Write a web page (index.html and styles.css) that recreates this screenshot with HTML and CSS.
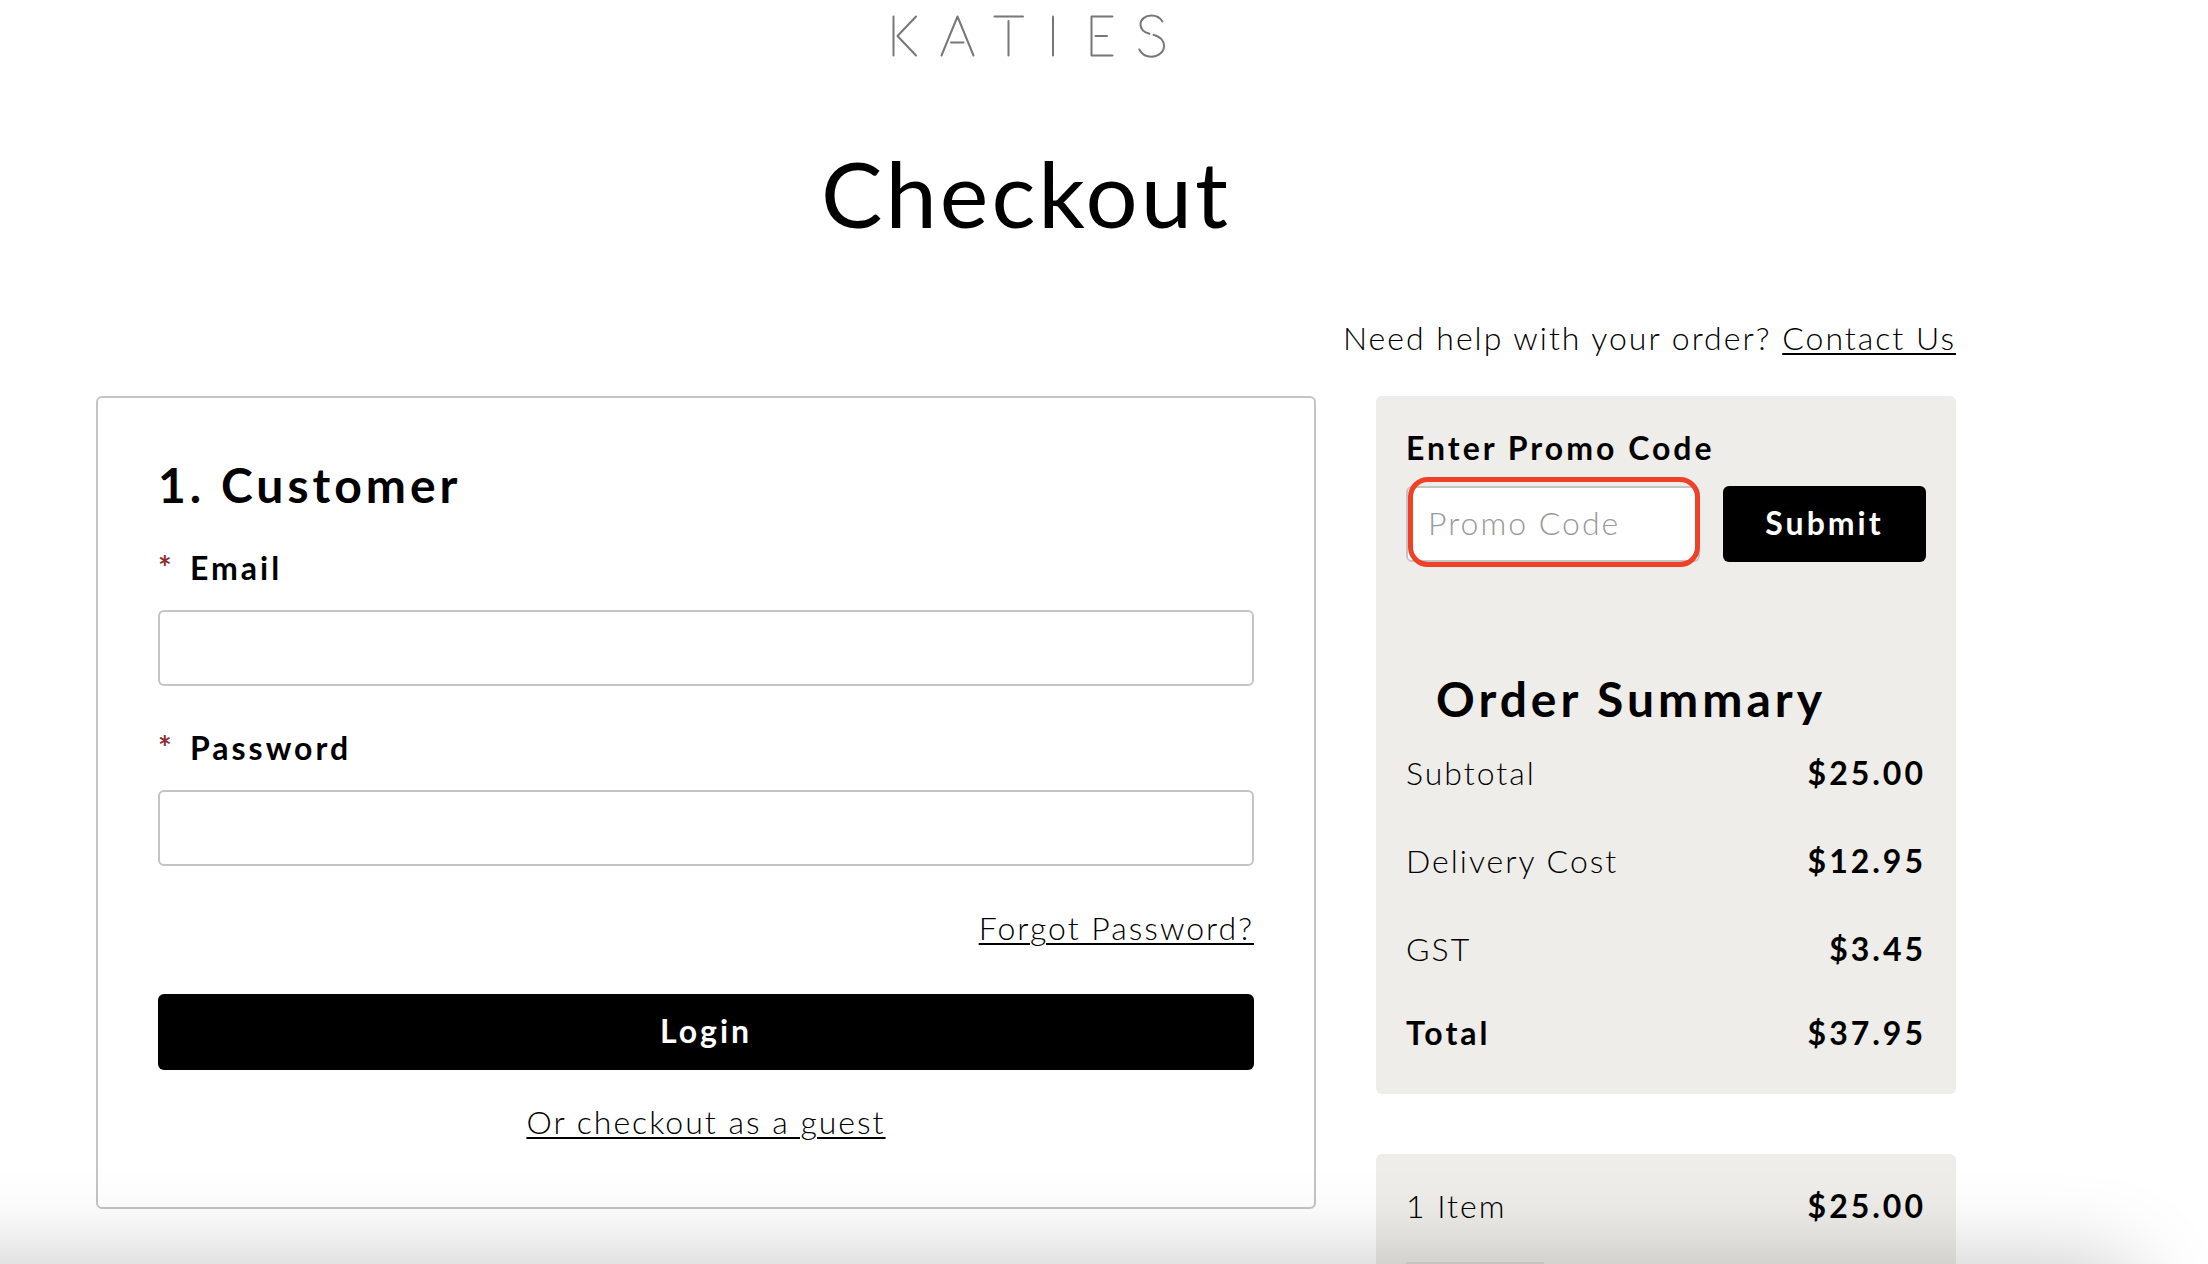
FILE: index.html
```html
<!DOCTYPE html>
<html lang="en">
<head>
<meta charset="utf-8">
<meta name="viewport" content="width=device-width, initial-scale=1">
<title>Checkout</title>
<link rel="stylesheet" href="styles.css">
</head>
<body>
<div class="page">
  <header class="header">
    <a class="logo" href="#" aria-label="Katies">
      <svg width="280" height="46" viewBox="26 13 280 46" fill="none" stroke="#77777a" stroke-width="2" stroke-linecap="round" stroke-linejoin="round" aria-hidden="true">
        <path d="M33.500 16.500V55.500M56 16.500L37.500 36L56 55.500"/>
        <path d="M81.500 55.500L97.500 16.500L113.500 55.500M91 42.500H103.500"/>
        <path d="M134.500 16.500H163M148.500 21V55.500"/>
        <path d="M193 16.500V55.500"/>
        <path d="M252.500 16.500H231.500V55.500H252.500M235.500 36H247"/>
        <path d="M302.500 21.500C300 17.500 296 15.500 291.500 15.500C285 15.500 280.500 19.500 280.500 24.500C280.500 30 285 32.500 289.500 33.800M293.500 34.800C299.500 36.500 304 40 304 46C304 52 298.500 56.700 291.500 56.700C286 56.700 281.500 54 279.300 49.500"/>
      </svg>
    </a>
    <h1 class="title">Checkout</h1>
  </header>

  <p class="help">Need help with your order? <a href="#">Contact Us</a></p>

  <main class="columns">
    <form class="customer">
      <h2 class="heading">1. Customer</h2>
      <div class="field">
        <label class="label" for="email"><span class="required">*</span>Email</label>
        <input class="input" id="email" type="email">
      </div>
      <div class="field">
        <label class="label" for="password"><span class="required">*</span>Password</label>
        <input class="input" id="password" type="password">
      </div>
      <a class="forgot" href="#">Forgot Password?</a>
      <button class="button" type="submit">Login</button>
      <a class="guest" href="#">Or checkout as a guest</a>
    </form>

    <aside class="sidebar">
      <section class="panel">
        <form class="promo">
          <label class="label" for="promo">Enter Promo Code</label>
          <div class="promo-row">
            <div class="promo-box">
              <input class="input" id="promo" type="text" placeholder="Promo Code">
            </div>
            <button class="button" type="submit">Submit</button>
          </div>
        </form>
        <h2 class="heading summary-heading">Order Summary</h2>
        <table class="totals">
          <tbody>
            <tr><th scope="row">Subtotal</th><td>$25.00</td></tr>
            <tr><th scope="row">Delivery Cost</th><td>$12.95</td></tr>
            <tr><th scope="row">GST</th><td>$3.45</td></tr>
            <tr class="total"><th scope="row">Total</th><td>$37.95</td></tr>
          </tbody>
        </table>
      </section>
      <section class="panel items">
        <div class="items-head"><span>1 Item</span><strong>$25.00</strong></div>
        <div class="thumb"></div>
      </section>
    </aside>
  </main>
</div>
<div class="bottom-shade"></div>
</body>
</html>
```

FILE: styles.css
```css
* {
  box-sizing: border-box;
}

html {
  height: 100%;
  overflow: hidden;
}

body {
  height: 100%;
  margin: 0;
  overflow: hidden;
  background: #fff;
  color: #000;
  font-family: Lato, "Open Sans", sans-serif;
  font-size: 32px;
  font-weight: 300;
  line-height: 40px;
  letter-spacing: 2px;
}

a {
  color: inherit;
  text-decoration: underline;
  text-decoration-thickness: 2px;
  text-underline-offset: 3px;
}

.page {
  padding: 13px 252px 0 96px;
}

.header {
  display: flex;
  flex-direction: column;
  align-items: center;
}

.logo,
.logo svg {
  display: block;
}

.title {
  margin: 84px 0 75px;
  font-size: 92px;
  font-weight: 400;
  line-height: 100px;
  letter-spacing: 3px;
}

.help {
  margin: 0 0 38px;
  text-align: right;
}

.columns {
  display: grid;
  grid-template-columns: 61fr 29fr;
  gap: 60px;
  align-items: start;
}

.customer {
  display: flex;
  flex-direction: column;
  padding: 57px 60px 65px;
  border: 2px solid #c4c4c4;
  border-radius: 6px;
}

.heading {
  margin: 0 0 34px;
  font-size: 48px;
  font-weight: 700;
  line-height: 60px;
  letter-spacing: 4px;
}

.field {
  margin-bottom: 42px;
}

.label {
  display: block;
  margin-bottom: 22px;
  font-weight: 700;
  letter-spacing: 3px;
}

.customer .heading {
  margin-bottom: 33px;
}

.required {
  display: inline-block;
  width: 32px;
  color: #8b2f2f;
}

.input {
  display: block;
  width: 100%;
  height: 76px;
  padding: 0 20px 4px;
  border: 2px solid #c4c4c4;
  border-radius: 6px;
  background: #fff;
  font: inherit;
  letter-spacing: 2px;
}

.input::placeholder {
  color: #999;
  opacity: 1;
}

.button {
  height: 76px;
  padding: 0 0 2px;
  border: 0;
  border-radius: 6px;
  background: #000;
  color: #fff;
  font: inherit;
  font-weight: 700;
  letter-spacing: 3px;
}

.forgot {
  align-self: flex-end;
  margin-bottom: 46px;
}

.guest {
  align-self: center;
  margin-top: 32px;
}

.sidebar {
  display: grid;
  gap: 60px;
}

.panel {
  padding: 32px 30px 21px;
  border-radius: 6px;
  background: #eeede9;
}

.promo .label {
  margin-bottom: 18px;
}

.promo-row {
  display: grid;
  grid-template-columns: 294fr 203fr;
  gap: 23px;
}

.promo-box {
  position: relative;
}

/* Highlight ring drawn over the promo code box */
.promo-box::after {
  content: "";
  position: absolute;
  inset: -9px 0 -5px 2px;
  border: 5px solid #ee4127;
  border-radius: 20px;
  pointer-events: none;
}

.summary-heading {
  margin: 107px 30px 0;
}

.totals {
  width: 100%;
  border-collapse: collapse;
}

.totals th,
.totals td {
  height: 88px;
  padding: 0;
}

.totals th {
  font-weight: 300;
  text-align: left;
}

.totals td {
  font-weight: 700;
  text-align: right;
  letter-spacing: 3px;
}

.totals .total th,
.totals .total td {
  height: 80px;
  font-weight: 700;
  letter-spacing: 3px;
}

.items-head {
  display: flex;
  justify-content: space-between;
  margin-bottom: 36px;
}

.items-head strong {
  font-weight: 700;
  letter-spacing: 3px;
}

.thumb {
  width: 138px;
  height: 180px;
  background: #dcdbde;
}

/* Soft shade rising from below the window */
.bottom-shade {
  position: fixed;
  top: 100%;
  right: 76px;
  left: -200px;
  height: 400px;
  border-radius: 20px;
  box-shadow: 0 0 90px rgba(0, 0, 0, 0.23);
  pointer-events: none;
}
```
